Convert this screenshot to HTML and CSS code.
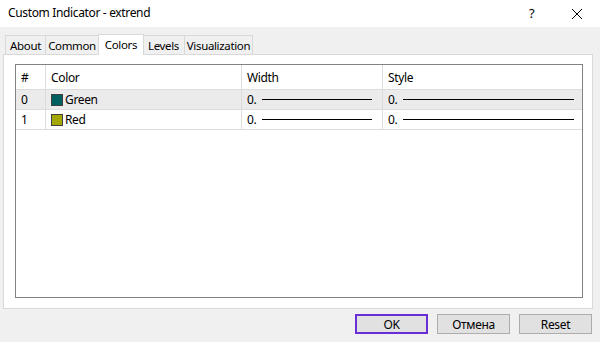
FILE: index.html
```html
<!DOCTYPE html>
<html lang="en">
<head>
    <meta charset="UTF-8">
    <title>Custom Indicator - extrend</title>
    <link rel="stylesheet" href="styles.css">
</head>
<body>
    <div class="window">
        <div class="titlebar">
            <span class="title">Custom Indicator - extrend</span>
            <span class="help">?</span>
            <span class="close">
                <svg width="12" height="12" viewBox="0 0 12 12">
                    <path d="M1 1 L11 11 M11 1 L1 11" stroke="#000" stroke-width="1"/>
                </svg>
            </span>
        </div>

        <div class="dialog">
            <div class="tabs">
                <div class="tab t-about">About</div>
                <div class="tab t-common">Common</div>
                <div class="tab t-colors active">Colors</div>
                <div class="tab t-levels">Levels</div>
                <div class="tab t-visual">Visualization</div>
            </div>

            <div class="panel">
                <div class="grid">
                    <div class="row head">
                        <div class="cell c-num">#</div>
                        <div class="cell c-color">Color</div>
                        <div class="cell c-width">Width</div>
                        <div class="cell c-style">Style</div>
                    </div>
                    <div class="row selected">
                        <div class="cell c-num">0</div>
                        <div class="cell c-color"><span class="swatch green"></span>Green</div>
                        <div class="cell c-width">0.<span class="line"></span></div>
                        <div class="cell c-style">0.<span class="line"></span></div>
                    </div>
                    <div class="row">
                        <div class="cell c-num">1</div>
                        <div class="cell c-color"><span class="swatch olive"></span>Red</div>
                        <div class="cell c-width">0.<span class="line"></span></div>
                        <div class="cell c-style">0.<span class="line"></span></div>
                    </div>
                </div>
            </div>

            <div class="buttons">
                <button class="btn default">OK</button>
                <button class="btn">Отмена</button>
                <button class="btn">Reset</button>
            </div>
        </div>
    </div>
</body>
</html>
```

FILE: styles.css
```css
body {
    margin: 0;
    padding: 0;
    font-family: 'Noto Sans', 'Liberation Sans', sans-serif;
    font-size: 12px;
    letter-spacing: -0.35px;
    color: #000000;
    background: #f0f0f0;
}

.window {
    width: 600px;
    height: 342px;
    display: flex;
    flex-direction: column;
    overflow: hidden;
}

.titlebar {
    height: 27px;
    flex-shrink: 0;
    background: #ffffff;
    display: flex;
    align-items: center;
    padding-left: 8px;
    box-sizing: border-box;
}

.title {
    flex: 1;
    margin-top: -3px;
}

.help {
    width: 12px;
    margin-right: 30px;
    margin-top: -1px;
    font-size: 13px;
}

.close {
    width: 12px;
    height: 12px;
    margin-right: 17px;
    display: flex;
}

.dialog {
    flex: 1;
    display: flex;
    flex-direction: column;
    padding: 8px 7px 0 3px;
}

/* tab strip */
.tabs {
    display: flex;
    align-items: flex-end;
    height: 19px;
    padding-left: 2px;
}

.tab {
    height: 19px;
    line-height: 19px;
    font-size: 11.5px;
    text-align: center;
    border: 1px solid #d9d9d9;
    border-bottom: none;
    background: #f0f0f0;
    box-sizing: border-box;
}

.t-about { width: 41px; }
.t-common { width: 53px; border-left: none; }
.t-colors { width: 46px; }
.t-levels { width: 42px; border-left: none; }
.t-visual { width: 68px; border-left: none; }

.tab.active {
    height: 21px;
    line-height: 19px;
    background: #ffffff;
    margin-left: -1px;
    margin-right: -1px;
    position: relative;
    z-index: 1;
    top: 1px;
}

.panel {
    height: 255px;
    flex-shrink: 0;
    background: #ffffff;
    border: 1px solid #d9d9d9;
    box-sizing: border-box;
    padding: 9px 9px 10px 11px;
}

.grid {
    height: 100%;
    border: 1px solid #828282;
    box-sizing: border-box;
}

.row {
    display: flex;
    height: 20px;
    border-bottom: 1px solid #dcdcdc;
    box-sizing: border-box;
}

.row.head {
    height: 25px;
}

.row.selected {
    background: #ebebeb;
}

.cell {
    display: flex;
    align-items: center;
    padding-left: 5px;
    border-right: 1px solid #dcdcdc;
    box-sizing: border-box;
}

.c-num { width: 30px; }
.c-color { width: 196px; }
.c-width { width: 141px; padding-right: 10px; }
.c-style { flex: 1; border-right: none; padding-right: 8px; }

.swatch {
    width: 12px;
    height: 12px;
    border: 1px solid #404040;
    box-sizing: border-box;
    margin-right: 2px;
}

.swatch.green { background: #005f5f; }
.swatch.olive { background: #a3a800; }

.line {
    flex: 1;
    height: 1px;
    background: #000000;
    margin-left: 6px;
}

/* bottom buttons */
.buttons {
    display: flex;
    justify-content: flex-end;
    gap: 9px;
    padding-top: 5px;
    padding-right: 1px;
}

.btn {
    width: 73px;
    height: 20px;
    font-family: inherit;
    font-size: 12px;
    letter-spacing: -0.35px;
    background: #e1e1e1;
    border: 1px solid #adadad;
    padding: 0;
    color: #000000;
}

.btn.default {
    border: 2px solid #6a2ed6;
}
```
